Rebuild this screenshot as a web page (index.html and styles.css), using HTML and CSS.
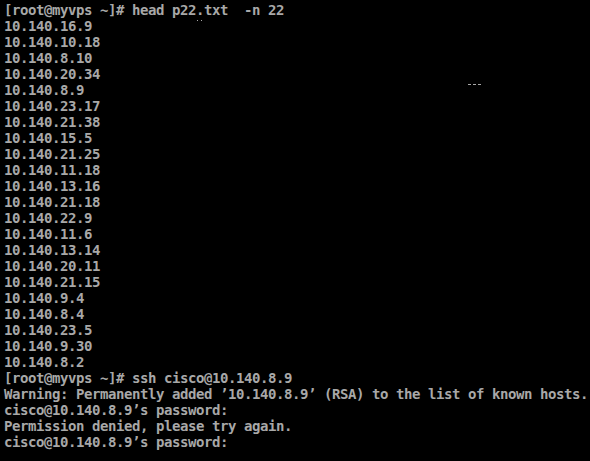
FILE: index.html
```html
<!DOCTYPE html>
<html>
<head>
<meta charset="utf-8">
<link rel="stylesheet" href="styles.css">
</head>
<body>
<div class="term">
<pre class="screen">[root@myvps ~]# head p22.txt  -n 22
10.140.16.9
10.140.10.18
10.140.8.10
10.140.20.34
10.140.8.9
10.140.23.17
10.140.21.38
10.140.15.5
10.140.21.25
10.140.11.18
10.140.13.16
10.140.21.18
10.140.22.9
10.140.11.6
10.140.13.14
10.140.20.11
10.140.21.15
10.140.9.4
10.140.8.4
10.140.23.5
10.140.9.30
10.140.8.2
[root@myvps ~]# ssh cisco@10.140.8.9
Warning: Permanently added ’10.140.8.9’ (RSA) to the list of known hosts.
cisco@10.140.8.9’s password:
Permission denied, please try again.
cisco@10.140.8.9’s password:</pre>
<span class="speck speck-a"></span>
<span class="speck speck-b"></span>
</div>
</body>
</html>
```
FILE: styles.css
```css
html, body {
  margin: 0;
  padding: 0;
  background: #000;
}
.term {
  position: relative;
  width: 590px;
  height: 461px;
  background: #000;
  overflow: hidden;
}
.screen {
  margin: 0;
  padding: 2px 0 0 4px;
  font-family: "DejaVu Sans Mono", "Liberation Mono", monospace;
  font-weight: bold;
  font-size: 14px;
  letter-spacing: -0.43px;
  line-height: 16px;
  color: #a8a8a8;
  white-space: pre;
}
.speck {
  position: absolute;
  height: 1px;
  background: #a8a8a8;
}
.speck-a {
  left: 197px;
  top: 20px;
  width: 5px;
  background: none;
  border-left: 1px solid #a8a8a8;
  border-right: 1px solid #a8a8a8;
  box-sizing: border-box;
}
.speck-b {
  left: 468px;
  top: 84px;
  width: 15px;
  background: repeating-linear-gradient(90deg, #a8a8a8 0 3px, transparent 3px 5px);
}
```
